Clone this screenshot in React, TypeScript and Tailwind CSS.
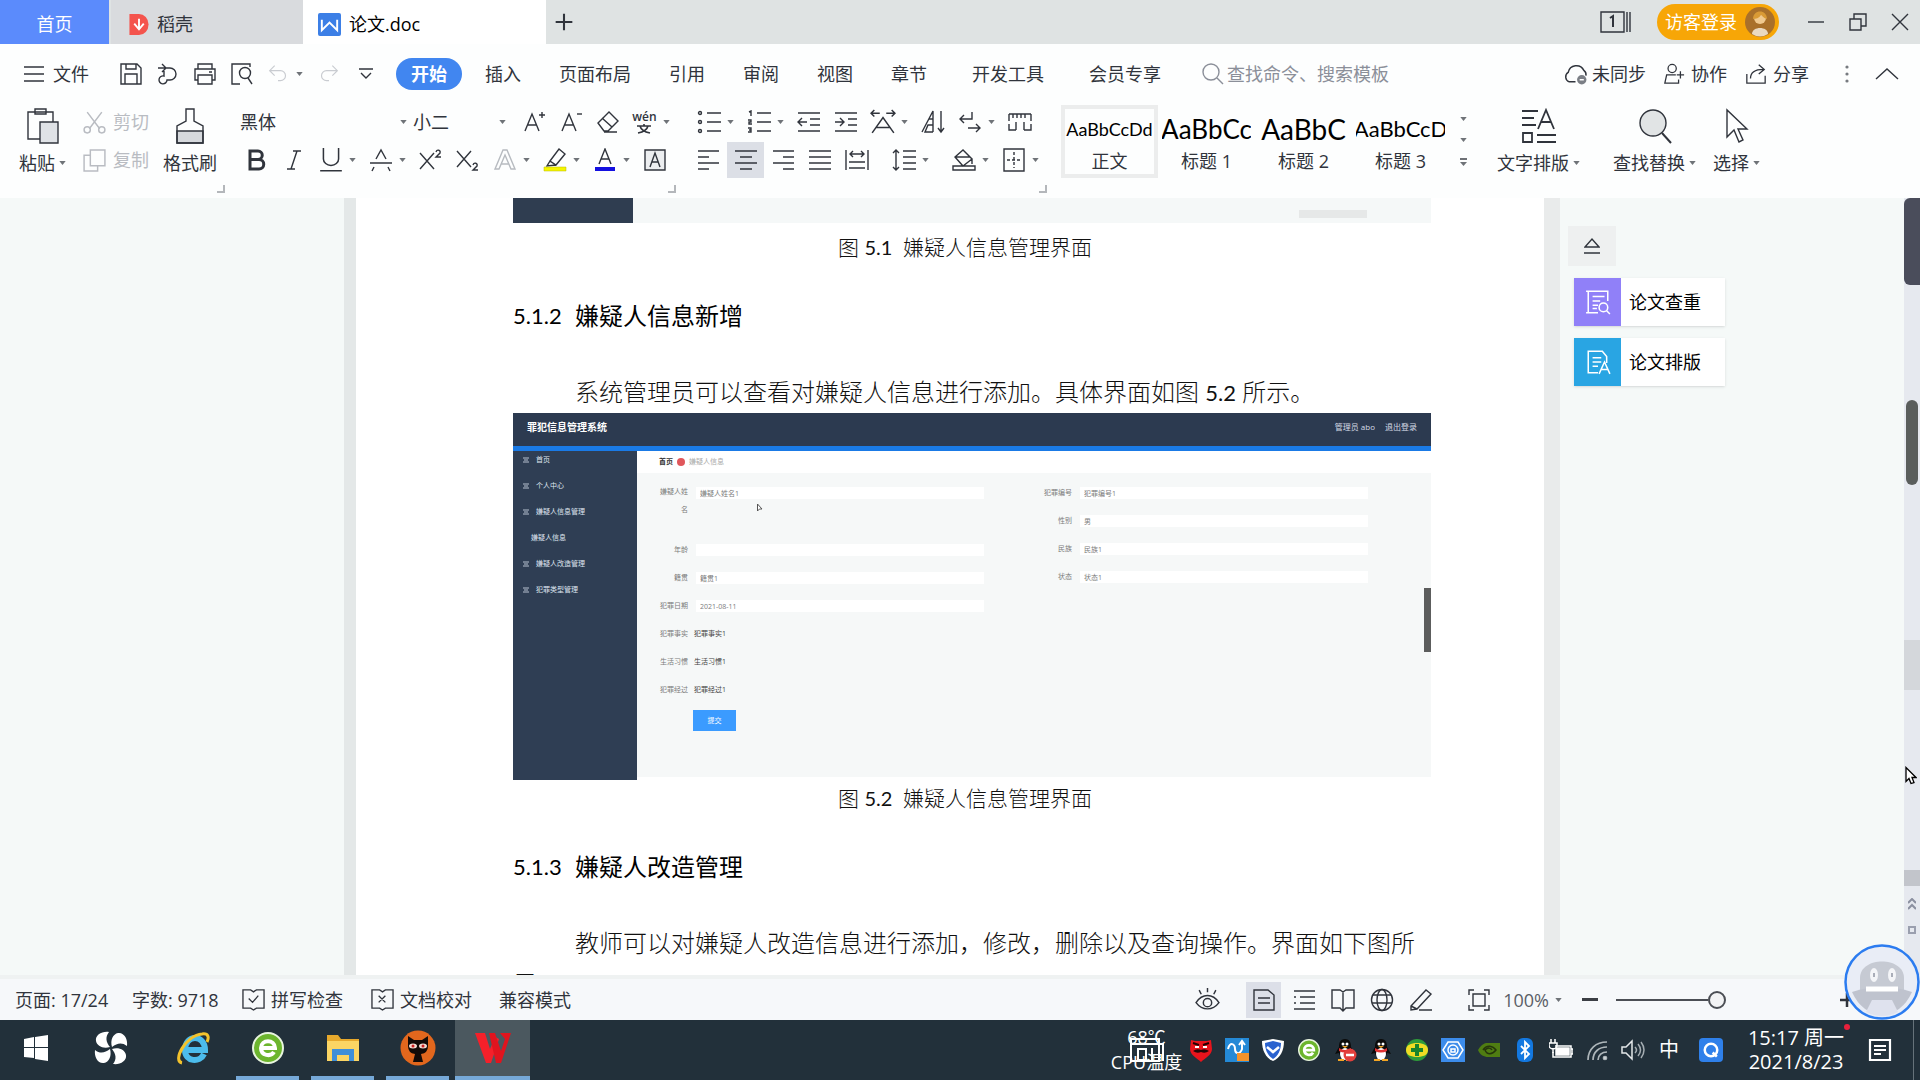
import React, { ReactNode } from "react";

type SvgProps = { children: ReactNode; className?: string; vb?: string };

/* Line icon drawn on a 24-unit grid */
function Ico({ children, className = "size-6", vb = "0 0 24 24" }: SvgProps) {
  return (
    <svg viewBox={vb} className={`shrink-0 ${className}`} fill="none" stroke="currentColor" strokeWidth="1.4" aria-hidden="true">
      {children}
    </svg>
  );
}

function Caret() {
  return (
    <svg viewBox="0 0 8 5" className="h-[4px] w-[7px] shrink-0" fill="#6f7378" aria-hidden="true">
      <path d="M0 0h8L4 5z" />
    </svg>
  );
}

function Tool({ label, caret, active, children }: { label: string; caret?: boolean; active?: boolean; children: ReactNode }) {
  return (
    <button
      aria-label={label}
      className={`flex h-9 shrink-0 items-center ${caret ? "w-[50px]" : "w-[37px]"} ${active ? "bg-[#dcdfe6]" : ""}`}
    >
      <span className="flex w-[37px] shrink-0 items-center justify-center">{children}</span>
      {caret && <Caret />}
    </button>
  );
}

function Corner() {
  return <span className="size-2 border-r-2 border-b-2 border-[#b4b7bb]" />;
}

/* ---------- title bar ---------- */
function TitleBar() {
  return (
    <header className="flex h-[44px] shrink-0 items-stretch bg-[#dfe3e3]">
      <button className="w-[109px] bg-[#5b8bfc] pt-1 text-white">首页</button>
      <button className="ml-0.5 flex w-[192px] items-center gap-2 bg-[#d9dbde] pt-1 pl-[18px]">
        <svg viewBox="0 0 20 22" className="h-[21px] w-5" aria-hidden="true">
          <path d="M0 0h10a10 11 0 0 1 0 22H0z" fill="#f4544d" />
          <path d="M5 10l5 6 5-6M10 15V5" stroke="#fff" strokeWidth="2" fill="none" />
        </svg>
        稻壳
      </button>
      <button className="flex w-[243px] items-center gap-2 bg-white pt-1 pl-[15px] text-black">
        <svg viewBox="0 0 24 24" className="size-[23px]" aria-hidden="true">
          <rect width="24" height="24" rx="2" fill="#3c7fe6" />
          <path d="M4 7v11l8-8 8 8V7" stroke="#fff" strokeWidth="2" fill="none" />
        </svg>
        论文.doc
      </button>
      <button aria-label="新建" className="flex w-9 items-center justify-center">
        <Ico className="size-5"><path d="M12 2v20M2 12h20" strokeWidth="2.5" /></Ico>
      </button>
      <div className="ml-auto flex items-center">
        <button aria-label="窗口列表" className="mr-[25px]">
          <Ico className="h-[22px] w-8" vb="0 0 32 22">
            <path d="M1 1h23v20H1zM27 1v20M30 1v20" />
            <path d="M10 7l3-2v11" strokeWidth="2" />
          </Ico>
        </button>
        <button className="mr-[28px] flex h-9 items-center gap-2 rounded-full bg-[#f7a607] pr-1 pl-2 text-white">
          访客登录
          <svg viewBox="0 0 30 30" className="size-[30px]" aria-hidden="true">
            <circle cx="15" cy="15" r="15" fill="#a9702a" />
            <path d="M7 27c0-8 16-8 16 0a15 15 0 0 1-16 0z" fill="#ead9c0" />
            <circle cx="15" cy="11" r="6" fill="#f0c98f" />
            <path d="M8 12c0-10 14-10 14 0-4-1-5-4-6-4-2 3-5 4-8 4z" fill="#d99a35" />
          </svg>
        </button>
        <button aria-label="最小化" className="mr-[23px]">
          <Ico className="h-5 w-[18px]" vb="0 0 18 20"><path d="M1 10h16" /></Ico>
        </button>
        <button aria-label="还原" className="mr-[23px]">
          <Ico className="size-5" vb="0 0 20 20"><path d="M2 7h11v11H2zM6 7V2h12v12h-5" /></Ico>
        </button>
        <button aria-label="关闭" className="mr-[11px]">
          <Ico className="size-[18px]" vb="0 0 18 18"><path d="M1 1l16 16M17 1L1 17" /></Ico>
        </button>
      </div>
    </header>
  );
}

/* ---------- menu row ---------- */
const TABS = ["插入", "页面布局", "引用", "审阅", "视图", "章节"];
const EXTRA_TABS = ["开发工具", "会员专享"];

function MenuRow() {
  return (
    <nav className="flex h-[59px] shrink-0 items-center">
      <button className="flex items-center gap-2 pl-[23px]">
        <Ico className="size-[22px]" vb="0 0 22 22"><path d="M1 4h20M1 11h20M1 18h20" /></Ico>
        文件
      </button>
      <div className="ml-[23px] flex items-center">
        <Tool label="保存">
          <Ico><path d="M2 2h16l4 4v16H2zM7 2v5h10V2M6 22V12h12v10" /></Ico>
        </Tool>
        <Tool label="输出为PDF">
          <Ico><path d="M2 6h12a6 6 0 0 1 0 12H11a4 4 0 1 1-3-4V9M6 2l4 4-4 4" /></Ico>
        </Tool>
        <Tool label="打印">
          <Ico><path d="M5 7V2h14v5M5 18H2V7h20v11h-3M5 13h14v9H5zM16 10h3" /></Ico>
        </Tool>
        <Tool label="打印预览">
          <Ico><path d="M10 22H2V2h18v3" /><circle cx="15" cy="11" r="5.5" /><path d="M18 16l4 6" /></Ico>
        </Tool>
        <button aria-label="撤销" className="flex w-[50px] items-center gap-2 pl-2 text-[#c9ccd1]">
          <Ico className="size-5"><path d="M2 8h13a6 6 0 0 1 0 12h-3M8 2L2 8l6 6" /></Ico>
          <Caret />
        </button>
        <button aria-label="恢复" className="flex w-[37px] items-center justify-center text-[#c9ccd1]">
          <Ico className="size-5"><path d="M22 8H9a6 6 0 0 0 0 12h3M16 2l6 6-6 6" /></Ico>
        </button>
        <Tool label="自定义快速访问">
          <Ico className="size-[14px]" vb="0 0 14 14"><path d="M0 2h14M2 6l5 5 5-5" /></Ico>
        </Tool>
      </div>
      <button className="ml-3 h-8 w-[66px] shrink-0 rounded-full bg-[#4186f0] font-bold text-white">开始</button>
      <div className="ml-[23px] flex gap-[38px] whitespace-nowrap">
        {TABS.map((t) => (
          <button key={t}>{t}</button>
        ))}
      </div>
      <div className="ml-[45px] flex gap-[45px] whitespace-nowrap">
        {EXTRA_TABS.map((t) => (
          <button key={t}>{t}</button>
        ))}
      </div>
      <label className="ml-[40px] flex items-center gap-0.5 text-[#8b8f99]">
        <Ico className="size-6"><circle cx="10" cy="10" r="8" /><path d="M16 16l6 6" /></Ico>
        <input aria-label="搜索" placeholder="查找命令、搜索模板" className="w-[180px] bg-transparent outline-none placeholder:text-[#8b8f99]" />
      </label>
      <div className="ml-auto flex items-center whitespace-nowrap">
        <button className="mr-[17px] flex items-center gap-1">
          <Ico className="size-[25px]">
            <path d="M12 20H6a5 5 0 0 1-1-9 8 8 0 0 1 15-2 5 5 0 0 1 2 5" />
            <circle cx="18" cy="18" r="4.5" fill="#7b7f86" stroke="none" /><path d="M16 18h4" stroke="#fff" />
          </Ico>
          未同步
        </button>
        <button className="mr-[18px] flex items-center gap-1.5">
          <Ico className="size-[22px]"><circle cx="10" cy="6" r="4.5" /><path d="M14 13H4l-2 9h15v-4M15 13h8M19 9v8" /></Ico>
          协作
        </button>
        <button className="mr-[36px] flex items-center gap-1.5">
          <Ico className="size-[22px]"><path d="M2 12v10h20v-8M6 17c0-7 5-10 14-10M15 2l6 5-6 5" /></Ico>
          分享
        </button>
        <button aria-label="更多" className="mr-[26px]">
          <svg viewBox="0 0 4 20" className="h-5 w-1" fill="#777b80"><circle cx="2" cy="3" r="1.6" /><circle cx="2" cy="10" r="1.6" /><circle cx="2" cy="17" r="1.6" /></svg>
        </button>
        <button aria-label="收起功能区" className="mr-[21px]">
          <Ico className="h-3 w-6" vb="0 0 24 12"><path d="M1 11L12 1l11 10" /></Ico>
        </button>
      </div>
    </nav>
  );
}

/* ---------- ribbon ---------- */
const STYLES = [
  { name: "正文", sample: "AaBbCcDd", size: "text-[18px]", active: true },
  { name: "标题 1", sample: "AaBbCc", size: "text-[26px]", active: false },
  { name: "标题 2", sample: "AaBbC", size: "text-[28px]", active: false },
  { name: "标题 3", sample: "AaBbCcD", size: "text-[22px]", active: false },
];

function BigTool({ label, caret = true, icon }: { label: string; caret?: boolean; icon: ReactNode }) {
  return (
    <button className="flex shrink-0 flex-col items-center whitespace-nowrap">
      <span className="flex h-[46px] items-center">{icon}</span>
      <span className="flex h-7 items-center gap-1">
        {label}
        {caret && <Caret />}
      </span>
    </button>
  );
}

function LetterA({ extra }: { extra: ReactNode }) {
  return <Ico><path d="M3 21L10 4l7 17M5 15h10" />{extra}</Ico>;
}

function Ribbon() {
  return (
    <section className="flex h-[95px] shrink-0 items-start overflow-hidden">
      <div className="flex w-[238px] shrink-0 pl-[19px]">
        <BigTool
          label="粘贴"
          icon={
            <Ico className="h-9 w-8" vb="0 0 32 36">
              <path d="M13 31H1V4h25v10M8 1h11v5H8z" /><path d="M13 14h18v21H13z" fill="#dfe2e6" />
            </Ico>
          }
        />
        <div className="ml-[16px] flex flex-col text-[#b9bcc2]">
          <button className="flex h-[38px] items-center gap-1.5">
            <Ico className="size-[25px]"><path d="M5 2l12 16M19 2L7 18" /><circle cx="5" cy="19" r="3" /><circle cx="19" cy="19" r="3" /></Ico>
            剪切
          </button>
          <button className="flex h-[38px] items-center gap-1.5">
            <Ico className="size-[25px]"><path d="M8 2h14v15H8zM8 7H2v15h13v-5" /></Ico>
            复制
          </button>
        </div>
        <div className="ml-[14px] w-[62px]">
          <BigTool
            label="格式刷"
            caret={false}
            icon={
              <Ico className="h-9 w-7" vb="0 0 28 36">
                <path d="M1 23h26v12H1z" fill="#d5d8dc" /><path d="M10 1h8v12l9 5v17H1V18l9-5z" />
              </Ico>
            }
          />
          <div className="flex justify-end pt-2"><Corner /></div>
        </div>
      </div>

      <div className="w-[452px] shrink-0">
        <div className="flex h-[38px] items-center">
          <span className="flex w-[172px] items-center pl-0.5">
            <select aria-label="字体" className="w-[160px] appearance-none bg-transparent outline-none"><option>黑体</option></select>
            <Caret />
          </span>
          <span className="flex w-[105px] items-center pl-[3px]">
            <select aria-label="字号" className="w-[86px] appearance-none bg-transparent outline-none"><option>小二</option></select>
            <Caret />
          </span>
          <Tool label="增大字号"><LetterA extra={<path d="M17 5h6M20 2v6" />} /></Tool>
          <Tool label="减小字号"><LetterA extra={<path d="M18 4h5" />} /></Tool>
          <Tool label="清除格式"><Ico><path d="M2 13L13 2l9 9-10 10H8zM6 8l10 9M8 22h13" /></Ico></Tool>
          <Tool label="拼音指南" caret>
            <span className="flex flex-col items-center">
              <span className="text-[12px] leading-[14px] font-semibold">wén</span>
              <Ico className="h-[10px] w-4" vb="0 0 16 10"><path d="M8 0v2M1 2h14M4 2c1 4 5 6 10 7M12 2c-1 4-5 6-10 7" strokeWidth="1.600" /></Ico>
            </span>
          </Tool>
        </div>
        <div className="flex h-[38px] items-center">
          <Tool label="加粗"><Ico><path d="M5 3h8a4 4 0 0 1 0 8.500H5zM5 11.500h9a4.700 4.700 0 0 1 0 9.500H5z" strokeWidth="3" /></Ico></Tool>
          <Tool label="倾斜"><Ico><path d="M11 3h8M5 21h8M15 3L9 21" /></Ico></Tool>
          <Tool label="下划线" caret><Ico className="size-[26px]"><path d="M5 1v10a7 6 0 0 0 14 0V1M2 22h20" /></Ico></Tool>
          <Tool label="删除线" caret><Ico><path d="M7 11L12 2l5 9M1 15h22M5 19l-2 4M19 19l2 4" /></Ico></Tool>
          <Tool label="上标"><Ico><path d="M1 5l14 16M15 5L1 21M17 4c1-3 5-2 4 1l-4 4h5" /></Ico></Tool>
          <Tool label="下标"><Ico><path d="M1 3l14 16M15 3L1 19M17 17c1-3 5-2 4 1l-4 4h5" /></Ico></Tool>
          <Tool label="文字效果" caret><span className="text-[#b7bbc0]"><Ico><path d="M2 21L10 2h4l8 19h-4l-6-14-6 14zM8 16h8" /></Ico></span></Tool>
          <Tool label="突出显示" caret><Ico><path d="M7 13L16 1l6 5-9 11zM7 13l-3 5 9-1" /><path d="M1 19h22v4H1z" fill="#f5f500" stroke="#b9b900" strokeWidth="0.500" /></Ico></Tool>
          <Tool label="字体颜色" caret><Ico><path d="M6 16L12 1l6 15M8 11h8" /><path d="M2 19h20v4H2z" fill="#1410e0" stroke="none" /></Ico></Tool>
          <Tool label="字符底纹"><Ico><path d="M2 2h20v20H2z" fill="#eceef0" /><path d="M7 19l5-14 5 14M9 14h6" /></Ico></Tool>
        </div>
        <div className="flex justify-end pt-1.5 pr-3.5"><Corner /></div>
      </div>

      <div className="w-[371px] shrink-0">
        <div className="flex h-[38px] items-center">
          <Tool label="项目符号" caret><Ico><path d="M10 3h14M10 12h14M10 21h14" /><circle cx="3" cy="3" r="1.500" /><circle cx="3" cy="12" r="1.500" /><circle cx="3" cy="21" r="1.500" /></Ico></Tool>
          <Tool label="编号" caret><Ico><path d="M10 3h14M10 12h14M10 21h14" /><path d="M2 2l2-1v5M1 10h3v2H2v2h3M1 18h3v4H1M2 20h2" /></Ico></Tool>
          <Tool label="减少缩进"><Ico><path d="M1 3h22M13 9h10M13 15h10M1 21h22M10 12H1M5 8l-4 4 4 4" /></Ico></Tool>
          <Tool label="增加缩进"><Ico><path d="M1 3h22M14 9h9M14 15h9M1 21h22M1 12h9M6 8l4 4-4 4" /></Ico></Tool>
          <Tool label="中文版式" caret><Ico className="size-[26px]"><path d="M2 22L12 8l10 14M6 17h12M1 4h8M4 1L1 4l3 3M23 4h-8M20 1l3 3-3 3" /></Ico></Tool>
          <Tool label="排序"><Ico><path d="M1 22L12 1v21M12 22H4l3-7h5M8 9h4M20 1v20M17 18l3 4 3-4" /></Ico></Tool>
          <Tool label="显示标记" caret><Ico><path d="M14 2v7H2M6 5L2 9l4 4M10 18h12M18 14l4 4-4 4" /></Ico></Tool>
          <Tool label="制表位"><Ico><path d="M1 4h22M1 4v7M5 4v4M9 4v4M13 4v4M17 4v4M23 4v7M1 14v6h7M8 20v-8M16 12v8M16 20h7v-6" /></Ico></Tool>
        </div>
        <div className="flex h-[38px] items-center">
          <Tool label="左对齐"><Ico><path d="M1 3h21M1 9h11M1 15h21M1 21h11" /></Ico></Tool>
          <Tool label="居中" active><Ico><path d="M1 3h22M6 9h12M1 15h22M6 21h12" /></Ico></Tool>
          <Tool label="右对齐"><Ico><path d="M2 3h21M12 9h11M2 15h21M12 21h11" /></Ico></Tool>
          <Tool label="两端对齐"><Ico><path d="M1 3h22M1 9h22M1 15h22M1 21h22" /></Ico></Tool>
          <Tool label="分散对齐"><Ico><path d="M1 2v20M23 2v20M4 14h16M4 20h16M5 6h14M8 3L5 6l3 3M16 3l3 3-3 3" /></Ico></Tool>
          <span className="ml-2.5"><Tool label="行距" caret><Ico><path d="M4 2v20M1 5l3-3 3 3M1 19l3 3 3-3M11 3h13M11 9h13M11 15h13M11 21h13" /></Ico></Tool></span>
          <span className="ml-2.5"><Tool label="底纹颜色" caret><Ico><path d="M3 9l8-7 9 9-9 7zM3 9h15M20 11v5M1 18h22v4H1z" /></Ico></Tool></span>
          <Tool label="边框" caret><Ico><path d="M2 1h20v22H2z" /><path d="M5 12h14M12 4v16" strokeDasharray="3 2" /></Ico></Tool>
        </div>
        <div className="flex justify-end pt-1.5 pr-3.5"><Corner /></div>
      </div>

      <div className="flex shrink-0 pt-0.5">
        {STYLES.map((s) => (
          <button
            key={s.name}
            className={`flex h-[73px] w-[97px] flex-col items-center overflow-hidden border-4 ${s.active ? "border-[#eceded]" : "border-transparent"}`}
          >
            <span className={`flex h-10 items-center font-[Lato] text-black ${s.size}`}>{s.sample}</span>
            <span className="leading-6">{s.name}</span>
          </button>
        ))}
        <div className="flex w-6 flex-col items-center justify-between py-3 pl-1">
          <Caret /><Caret />
          <Ico className="h-2 w-[7px]" vb="0 0 7 8"><path d="M0 1h7" /><path d="M0 4h7L3.500 8z" fill="#6f7378" stroke="none" /></Ico>
        </div>
      </div>
      <div className="flex shrink-0 gap-[33px] pl-[24px]">
        <BigTool label="文字排版" icon={<Ico className="h-9 w-9" vb="0 0 36 36"><path d="M1 3h16M1 10h12M1 17h14M17 21L25 2l8 19M20 14h10M2 25h9v9H2zM16 27h19M16 34h19" strokeWidth="1.800" /></Ico>} />
        <BigTool label="查找替换" icon={<Ico className="h-9 w-9" vb="0 0 36 36"><circle cx="16" cy="15" r="13" fill="#e1e4e5" /><path d="M25 25l9 10" strokeWidth="2" /></Ico>} />
        <span className="-ml-[16px]"><BigTool label="选择" icon={<Ico className="h-9 w-6" vb="0 0 24 36"><path d="M2 2v27l7-7 5 12 4-2-5-11h9z" /></Ico>} /></span>
      </div>
    </section>
  );
}

/* ---------- document ---------- */
const SIDE = ["首页", "个人中心", "嫌疑人信息管理", "嫌疑人信息", "嫌疑人改造管理", "犯罪类型管理"];
const LEFT_FIELDS = [
  ["年龄", ""],
  ["籍贯", "籍贯1"],
  ["犯罪日期", "2021-08-11"],
];
const PLAIN = [
  ["犯罪事实", "犯罪事实1"],
  ["生活习惯", "生活习惯1"],
  ["犯罪经过", "犯罪经过1"],
];
const RIGHT_FIELDS = [
  ["犯罪编号", "犯罪编号1"],
  ["性别", "男"],
  ["民族", "民族1"],
  ["状态", "状态1"],
];

function Field({ label, value, plain }: { label: string; value: string; plain?: boolean }) {
  return (
    <label className="flex h-7 items-center">
      <span className="w-[51px] shrink-0 text-right">{label}</span>
      {plain ? (
        <span className="pl-1.5 text-[#444]">{value}</span>
      ) : (
        <input defaultValue={value} className="ml-2 h-3 w-[288px] bg-white px-1 outline-none" />
      )}
    </label>
  );
}

function Figure() {
  return (
    <figure className="relative h-[367px] w-full text-[7px] leading-[10px] text-[#7c7c7c]">
      <div className="flex h-[38px] items-start border-b-[5px] border-[#1a7ae6] bg-[#2c3a50] px-[14px] pt-[9px] text-[8px] text-[#d5dbe6]">
        <span className="text-[10px] font-bold text-white">罪犯信息管理系统</span>
        <span className="mr-2.5 ml-auto">管理员 abo</span>
        <span>退出登录</span>
      </div>
      <div className="flex h-[329px]">
        <ul className="w-[124px] shrink-0 bg-[#2f3e54] text-[#dfe5ef]">
          {SIDE.map((s, i) => (
            <li key={s} className={`flex h-[26px] items-start pt-1 ${i === 3 ? "pl-[18px]" : "gap-[7px] pl-2.5"}`}>
              {i !== 3 && (
                <svg viewBox="0 0 6 6" className="mt-0.5 size-[6px]" stroke="#b7c0cf" aria-hidden="true"><path d="M0 1h6M1 3h4M0 5h6" /></svg>
              )}
              {s}
            </li>
          ))}
        </ul>
        <div className="h-[326px] min-w-0 flex-1 bg-[#f6f8f8]">
          <div className="flex h-[22px] items-center gap-1 bg-white pl-[22px]">
            <b className="text-[#333]">首页</b>
            <span className="size-2 rounded-full bg-[#e0575b]" />
            <span className="text-[#aaa]">嫌疑人信息</span>
          </div>
          <div className="flex justify-between pt-1.5 pr-[63px]">
            <div>
              <label className="flex h-[57px] items-start">
                <span className="w-[51px] pt-1 pl-5 text-right leading-[18px]">嫌疑人姓名</span>
                <input defaultValue="嫌疑人姓名1" className="mt-2 ml-2 h-3 w-[288px] bg-white px-1 outline-none" />
              </label>
              {LEFT_FIELDS.map(([l, v]) => <Field key={l} label={l} value={v} />)}
              {PLAIN.map(([l, v]) => <Field key={l} label={l} value={v} plain />)}
              <button className="mt-1.5 ml-14 h-[21px] w-[43px] bg-[#3b9bff] text-white">提交</button>
            </div>
            <div>{RIGHT_FIELDS.map(([l, v]) => <Field key={l} label={l} value={v} />)}</div>
          </div>
        </div>
      </div>
      <span className="absolute top-[175px] right-0 h-16 w-[7px] bg-[#5c5d5d]" />
      <svg viewBox="0 0 12 18" className="absolute top-[90px] left-[244px] h-2.5 w-1.5" fill="#fff" stroke="#555" strokeWidth="2"><path d="M1 1v14l4-4 5 0z" /></svg>
    </figure>
  );
}

function Heading({ num, children }: { num: string; children: ReactNode }) {
  return (
    <h2 className="mt-[33px] mb-[38px] flex text-[24px] leading-9 text-black">
      <span className="w-[62px] font-[Lato] text-[22px]">{num}</span>
      {children}
    </h2>
  );
}

function Caption({ num }: { num: string }) {
  return (
    <p className="pl-[325px] text-[21px] leading-9 font-light">
      图 <span className="font-[Lato] text-[20px] font-normal">{num}</span>&ensp;嫌疑人信息管理界面
    </p>
  );
}

function PanelButton({ label, tone, icon }: { label: string; tone: string; icon: ReactNode }) {
  return (
    <button className="flex h-[48px] w-[151px] items-center bg-white text-black shadow-sm">
      <span className={`flex h-full w-[47px] items-center justify-center text-white ${tone}`}>{icon}</span>
      <span className="pl-2">{label}</span>
    </button>
  );
}

function Workspace() {
  return (
    <main className="relative flex min-h-0 flex-1 overflow-hidden bg-[#f5f9f8]">
      <div className="w-[356px] shrink-0 border-r-[12px] border-[#e4e8e8]" />
      <article className="min-w-0 flex-1 overflow-hidden bg-white pr-[113px] pl-[157px] text-[24px] text-[#111]">
        <div className="mb-1.5 flex h-[25px] bg-[#f5f8f8]">
          <span className="w-[120px] bg-[#2f3d50]" />
          <span className="mt-3 mr-16 ml-auto h-2 w-[68px] bg-[#e6e8e8]" />
        </div>
        <Caption num="5.1" />
        <Heading num="5.1.2">嫌疑人信息新增</Heading>
        <p className="indent-[62px] leading-10 font-light">
          系统管理员可以查看对嫌疑人信息进行添加。具体界面如图 <span className="font-[Lato] text-[22px] font-normal">5.2</span> 所示。
        </p>
        <Figure />
        <Caption num="5.2" />
        <Heading num="5.1.3">嫌疑人改造管理</Heading>
        <p className="indent-[62px] leading-10 font-light">教师可以对嫌疑人改造信息进行添加，修改，删除以及查询操作。界面如下图所示</p>
      </article>
      <aside className="flex w-[360px] shrink-0 flex-col items-start gap-3 border-l-[16px] border-[#e9ebeb] pt-7 pl-[14px]">
        <button aria-label="收起面板" className="-ml-1.5 flex h-10 w-12 items-center justify-center bg-[#eef0f0]">
          <Ico className="h-[18px] w-4" vb="0 0 16 18"><path d="M1 10l7-8 7 8zM0 16h16" /></Ico>
        </button>
        <PanelButton
          label="论文查重"
          tone="bg-[#9080f8]"
          icon={<Ico className="size-[26px]"><path d="M12 22H3V2h18v9M3 2H1M3 22H1M7 7h11M7 11h7M7 15h5M7 18h4" /><circle cx="17" cy="17" r="4" /><path d="M20 20l3 3" /></Ico>}
        />
        <PanelButton
          label="论文排版"
          tone="bg-[#29a5e3]"
          icon={<Ico className="size-[26px]"><path d="M12 22H3V2h13l4 5v6M7 8h8M7 12h8M7 16h5M13 23l5-11 5 11M15 19h6" /></Ico>}
        />
      </aside>
      <div className="flex w-4 shrink-0 flex-col items-center bg-[#e6e9ef]">
        <span className="h-[87px] w-full shrink-0 rounded-l-md bg-[#4a4d5b]" />
        <span className="mt-[115px] h-[85px] w-3 shrink-0 rounded-md bg-[#5a5e5c]" />
        <span className="mt-[155px] h-[50px] w-full shrink-0 bg-[#d4d7db]" />
        <span className="mt-[180px] h-4 w-full shrink-0 bg-[#c2c5cb]" />
        <span className="mt-3 text-[#8b90a0]"><Ico className="h-3 w-2" vb="0 0 8 12"><path d="M0 5l4-4 4 4M0 11l4-4 4 4" strokeWidth="2" /></Ico></span>
        <span className="mt-4 size-2 shrink-0 border-2 border-[#9a9fae]" />
      </div>
      <svg viewBox="0 0 12 18" className="absolute right-[3px] bottom-[190px] h-[19px] w-3" fill="#fff" stroke="#000" strokeWidth="1.300">
        <path d="M1 1v14l3-3 2 5 3-1-2-5h4z" />
      </svg>
    </main>
  );
}

/* ---------- status bar ---------- */
function StatusBar() {
  return (
    <footer className="relative flex h-[45px] shrink-0 items-center border-t-4 border-[#eff2f2] bg-[#f6f8fa] pl-[15px] whitespace-nowrap">
      <span className="w-[117px]">页面: 17/24</span>
      <span className="w-[110px]">字数: 9718</span>
      <button className="flex w-[129px] items-center gap-1.5">
        <Ico className="size-[23px]"><path d="M1 2h8l3 2 3-2h8v19h-8l-3 2-3-2H1zM7 11l4 4 6-7" /></Ico>
        拼写检查
      </button>
      <button className="flex w-[128px] items-center gap-1.5">
        <Ico className="size-[23px]"><path d="M1 2h8l3 2 3-2h8v19h-8l-3 2-3-2H1zM8 8l7 7M15 8l-7 7" /></Ico>
        文档校对
      </button>
      <span>兼容模式</span>
      <div className="ml-auto flex items-center">
        <button aria-label="护眼模式" className="mr-[26px]"><Ico className="size-[25px]"><path d="M1 15c6-9 16-9 22 0-6 8-16 8-22 0zM12 1v4M4 3l2 4M20 3l-2 4" /><circle cx="12" cy="15" r="4" /></Ico></button>
        <button aria-label="页面视图" className="mr-1 flex h-9 w-[35px] items-center justify-center bg-[#dcdfe8]"><Ico><path d="M2 2h14l6 5v15H2zM6 10h12M6 15h12" /></Ico></button>
        <div className="mr-[21px] flex gap-0.5">
          <Tool label="大纲"><Ico><path d="M2 3h21M8 9h15M8 15h15M2 21h21M2 9h2M2 15h2" /></Ico></Tool>
          <Tool label="阅读版式"><Ico><path d="M1 2h8l3 2 3-2h8v18h-8l-3 3-3-3H1zM12 4v18" /></Ico></Tool>
          <Tool label="Web版式"><Ico><circle cx="12" cy="12" r="10.500" /><ellipse cx="12" cy="12" rx="5" ry="10.500" /><path d="M3 7h18M2 15h20" /></Ico></Tool>
          <Tool label="写作模式"><Ico><path d="M2 18L17 2l5 4L8 21l-6 1zM2 18l6 3M10 22h13" /></Ico></Tool>
        </div>
        <Tool label="适合页面"><Ico><path d="M2 7V2h5M17 2h5v5M22 17v5h-5M7 22H2v-5M6 6h12v12H6z" /></Ico></Tool>
        <button className="ml-1.5 flex items-center gap-1.5 text-[#5a5e66]">100%<Caret /></button>
        <button aria-label="缩小" className="ml-5 flex h-6 items-center"><span className="h-[3px] w-4 bg-[#3b3e44]" /></button>
        <input
          type="range"
          aria-label="缩放"
          defaultValue={48}
          className="ml-[18px] h-[18px] w-[210px] appearance-none bg-[linear-gradient(#4b4e54,#4b4e54)] bg-[length:92px_2px] bg-left bg-no-repeat [&::-webkit-slider-thumb]:size-[18px] [&::-webkit-slider-thumb]:appearance-none [&::-webkit-slider-thumb]:rounded-full [&::-webkit-slider-thumb]:border-2 [&::-webkit-slider-thumb]:border-[#4b4e54] [&::-webkit-slider-thumb]:bg-[#f2f3f4]"
        />
        <button aria-label="放大" className="mr-[66px] ml-3.5"><Ico className="size-3.5" vb="0 0 14 14"><path d="M7 0v14M0 7h14" strokeWidth="2.500" /></Ico></button>
      </div>
      <svg viewBox="0 0 76 76" className="absolute right-0 bottom-0 size-[76px]" aria-hidden="true">
        <circle cx="38" cy="38" r="36.500" fill="#e9edf6" stroke="#2b7cf0" strokeWidth="2.500" />
        <path d="M16 34c0-22 44-22 44 0v12H16z" fill="#c6cad3" />
        <path d="M8 48q30-10 60 0-10 22-30 22T8 48z" fill="#bfc3ce" />
        <path d="M28 56h20l6 12q-16 8-32 0z" fill="#dfe2ee" />
        <ellipse cx="30" cy="31" rx="4" ry="7" fill="#f4f5f8" />
        <ellipse cx="48" cy="31" rx="4" ry="7" fill="#f4f5f8" />
        <path d="M30 29v4M48 29v4" stroke="#a9adb8" strokeWidth="2" />
        <path d="M22 45h32" stroke="#fff" strokeWidth="5" fill="none" />
      </svg>
    </footer>
  );
}

/* ---------- taskbar ---------- */
function App360({ size }: { size: string }) {
  return (
    <svg viewBox="0 0 32 32" className={size} aria-hidden="true">
      <circle cx="16" cy="16" r="15" fill="#6cb52d" stroke="#e9f5df" strokeWidth="2" />
      <path d="M9 16h14c0-9-14-9-14 0 0 8 10 9 13 4" stroke="#fff" strokeWidth="4" fill="none" />
    </svg>
  );
}

function TaskSlot({ label, state, children }: { label: string; state?: "open" | "active"; children: ReactNode }) {
  return (
    <button
      aria-label={label}
      className={`flex h-full w-[75px] shrink-0 items-center justify-center ${state === "active" ? "bg-[#4b585f]" : "px-1.5"}`}
    >
      <span className={`flex h-full w-full items-center justify-center border-b-4 ${state ? "border-[#76a9d8]" : "border-transparent"}`}>{children}</span>
    </button>
  );
}

function Penguin({ busy }: { busy?: boolean }) {
  return (
    <svg viewBox="0 0 24 24" className="size-6" aria-hidden="true">
      <path d="M12 1c-5 0-6 4-6 8l-4 7 4-1c1 7 11 7 12 0l4 1-4-7c0-4-1-8-6-8z" fill="#0b0b0b" />
      <ellipse cx="12" cy="16" rx="5" ry="6" fill="#fff" />
      <circle cx="10" cy="6" r="1.500" fill="#fff" /><circle cx="14" cy="6" r="1.500" fill="#fff" />
      <path d="M6 10q6 4 12 0v3q-6 3-12 0z" fill="#e03232" />
      <path d="M9 8h6l-3 2zM5 21h6v2H5zM13 21h6v2h-6z" fill="#f5a623" />
      {busy && <><circle cx="17" cy="17" r="6.500" fill="#e2403c" /><path d="M13 17h8" stroke="#fff" strokeWidth="2.500" /></>}
    </svg>
  );
}

function TrayIcons() {
  const icons: ReactNode[] = [
    <svg viewBox="0 0 24 24" className="size-6"><path d="M2 2l4 1h12l4-1 1 9c0 6-7 9-11 13C8 20 1 17 1 11z" fill="#e8141c" /><path d="M4 5l6 2M20 5l-6 2" stroke="#200" strokeWidth="2" /><path d="M6 8h4v2H6zM14 8h4v2h-4z" fill="#fff" /><path d="M4 13q4-3 8-1 4-2 8 1-4 3-8 1-4 2-8-1z" fill="#220808" /></svg>,
    <svg viewBox="0 0 24 24" className="size-6"><rect width="24" height="24" fill="#2489d6" /><path d="M3 11c2-8 7-5 7 0s5 6 7 0V4M14 7l3-4 3 4" stroke="#fff" strokeWidth="2" fill="none" /><path d="M12 15h12v8H12z" fill="#f3932b" /></svg>,
    <svg viewBox="0 0 24 24" className="size-6"><path d="M1 3l11-2 11 2c0 10-4 17-11 20C5 20 1 13 1 3z" fill="#fff" /><path d="M4 5l8-2 8 2c0 7-3 13-8 16C7 18 4 12 4 5z" fill="#2a62cf" /><path d="M6 9l6 5 6-5" stroke="#fff" strokeWidth="2.500" fill="none" /></svg>,
    <App360 size="size-[22px]" />,
    <Penguin busy />,
    <Penguin />,
    <svg viewBox="0 0 24 24" className="size-6"><circle cx="12" cy="12" r="11" fill="#2f9b3a" /><path d="M1 12c0-5 5-7 11-7s11 2 11 7-5 7-11 7S1 17 1 12z" fill="#f0dc24" /><path d="M12 6v12M6 12h12" stroke="#18832c" strokeWidth="4" /></svg>,
    <svg viewBox="0 0 24 24" className="size-6"><rect width="24" height="24" fill="#3c8ceb" /><g fill="none" stroke="#fff" strokeWidth="1.500"><path d="M7 4h10l5 8-5 8H7l-5-8z" /><circle cx="12" cy="12" r="5" /><path d="M10 11h4v3h-4z" /></g></svg>,
    <svg viewBox="0 0 24 24" className="size-6"><path d="M1 12c4-7 8-7 10-7h12v14H11c-4 0-8-2-10-7z" fill="#4f7d12" /><path d="M6 12c4-6 10-4 13 0-4 5-9 5-11 0 3-3 6-2 7 0" stroke="#25350c" strokeWidth="1.500" fill="none" /></svg>,
    <svg viewBox="0 0 24 24" className="size-6"><rect x="4" width="16" height="24" rx="6" fill="#1378e0" /><path d="M8 8l8 8-4 4V4l4 4-8 8" stroke="#fff" strokeWidth="1.800" fill="none" /></svg>,
    <svg viewBox="0 0 24 24" className="size-6" fill="none" stroke="#fff" strokeWidth="1.500"><path d="M6 8h16v11H4v-5M22 11h2v5h-2" /><path d="M7 10h13v7H7z" fill="#fff" /><path d="M2 1v4M6 1v4M0 5h8v2a3 3 0 0 1-8 0zM4 10v5" /></svg>,
    <svg viewBox="0 0 24 24" className="size-6" fill="none" stroke="#aeb6ba" strokeWidth="1.700"><path d="M3 22C3 11 11 4 22 4M8 22c0-8 6-13 14-13M13 22c0-5 4-8 9-8" /><circle cx="20" cy="20" r="1.500" fill="#fff" /></svg>,
    <svg viewBox="0 0 24 24" className="size-6" fill="none" stroke="#e4e7e9" strokeWidth="1.500"><path d="M1 9h4l6-6v18l-6-6H1z" /><path d="M14 9q3 3 0 6M17 6q5 6 0 12M20 4q6 8 0 16" stroke="#a5adb2" /></svg>,
  ];
  return (
    <div className="flex items-center">
      {icons.map((ic, i) => (
        <span key={i} className="flex w-9 items-center justify-center">{ic}</span>
      ))}
    </div>
  );
}

const LOBE = "M16 16C9 18 3 15 2 10 1 4 8 0 15 1c-4 5-3 10 1 15z";

function Taskbar() {
  return (
    <div className="relative flex h-[60px] shrink-0 items-center bg-[#22303a] whitespace-nowrap text-white">
      <div className="-ml-0.5 flex h-full">
        <TaskSlot label="开始菜单">
          <svg viewBox="0 0 24 26" className="h-[26px] w-6" fill="#fff"><path d="M0 4l10-2v10H0zM11 2l13-2v12H11zM0 13h10v10L0 22zM11 13h13v13l-13-2z" /></svg>
        </TaskSlot>
        <TaskSlot label="搜狗">
          <svg viewBox="0 0 34 34" className="size-[34px]" fill="#fff">
            <path d={LOBE} />
            <path d={LOBE} transform="rotate(90 17 17)" />
            <path d={LOBE} transform="rotate(180 17 17)" />
            <path d={LOBE} transform="rotate(270 17 17)" />
          </svg>
        </TaskSlot>
        <span className="w-[7px]" />
        <TaskSlot label="Internet Explorer">
          <svg viewBox="0 0 34 34" className="size-[34px]" fill="none">
            <path d="M9 19h20c0-16-20-16-20 0 0 12 15 13 19 4" stroke="#4cbcec" strokeWidth="6" />
            <path d="M6 32C-4 30 10 4 26 3c7-1 7 4 5 8" stroke="#f3c22c" strokeWidth="3" />
          </svg>
        </TaskSlot>
        <TaskSlot label="360浏览器" state="open"><App360 size="size-8" /></TaskSlot>
        <TaskSlot label="文件资源管理器" state="open">
          <svg viewBox="0 0 34 28" className="h-7 w-[34px]"><path d="M1 1h11l3 4h18v22H1z" fill="#e7a92c" /><path d="M1 7h32v20H1z" fill="#fbd564" /><path d="M6 15h22v12h-5v-6H11v6H6z" fill="#3f8fd9" /></svg>
        </TaskSlot>
        <TaskSlot label="小黑猫" state="open">
          <svg viewBox="0 0 36 36" className="size-9">
            <circle cx="18" cy="18" r="17.500" fill="#e2671d" />
            <path d="M8 6l6 4h8l6-4v10q0 7-7 8l2 8H13l2-8q-7-1-7-8z" fill="#120b08" />
            <ellipse cx="13" cy="16" rx="4" ry="2.500" fill="#f3d9d0" /><ellipse cx="23" cy="16" rx="4" ry="2.500" fill="#f3d9d0" />
            <circle cx="13" cy="16" r="1.500" fill="#c22" /><circle cx="23" cy="16" r="1.500" fill="#c22" />
          </svg>
        </TaskSlot>
        <TaskSlot label="WPS文字" state="active">
          <svg viewBox="0 0 36 32" className="h-8 w-9"><path d="M0 1h10l5 16 5-12 4 2-8 24h-5z" fill="#f5202a" /><path d="M14 1h6l6 18 4-12-5-6h11l-10 30h-5z" fill="#e0141e" /></svg>
        </TaskSlot>
      </div>
      <div className="ml-auto flex items-center">
        <div className="relative flex w-[73px] flex-col items-center text-[18px] leading-[25px]">
          <span>68℃</span>
          <span>CPU温度</span>
          <svg viewBox="0 0 36 26" className="absolute top-3 h-[26px] w-9" fill="none" stroke="#fff" strokeWidth="2"><path d="M2 2h28v22H2zM2 7h32v17M9 12h8v11H9zM23 11v13" /></svg>
        </div>
        <TrayIcons />
        <span className="w-9 text-center text-[20px]">中</span>
        <span className="mx-3 flex size-6 items-center justify-center rounded bg-[#2f80ea]">
          <Ico className="size-5"><circle cx="12" cy="12" r="7.500" strokeWidth="3" /><path d="M14 15l5 5" strokeWidth="3" /></Ico>
        </span>
        <div className="w-[122px] text-center text-[20px] leading-6">
          <div>15:17 周一</div>
          <div>2021/8/23</div>
        </div>
        <button aria-label="通知" className="mr-[21px] ml-[11px]"><Ico className="size-6"><path d="M2 2h20v20H2z" strokeWidth="2.200" /><path d="M6 8h12M6 12h12M6 16h7" strokeWidth="2" /></Ico></button>
        <span className="h-[60px] w-[7px] border-l border-[#66727a]" />
      </div>
      <span className="absolute top-1 right-[70px] size-1.5 rounded-full bg-[#e8203c]" />
    </div>
  );
}

export default function App() {
  return (
    <div className="flex h-screen flex-col overflow-hidden bg-[#fdfefe] font-['Open_Sans','Noto_Sans_CJK_SC',sans-serif] text-[18px] leading-6 text-[#30343c]">
      <TitleBar />
      <MenuRow />
      <Ribbon />
      <Workspace />
      <StatusBar />
      <Taskbar />
    </div>
  );
}
